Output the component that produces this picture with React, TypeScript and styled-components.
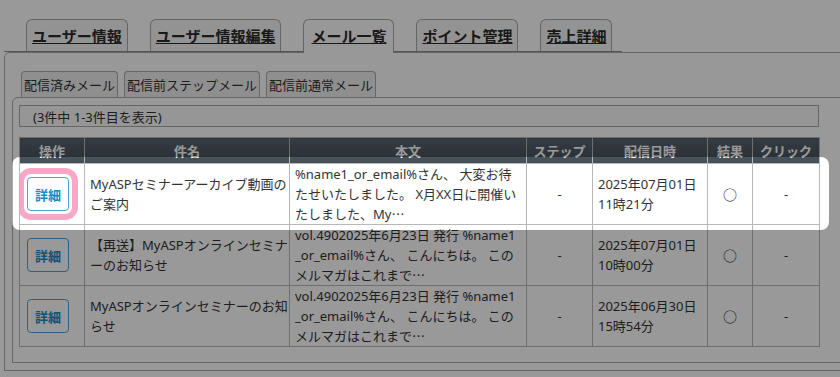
import React from 'react';
import styled, {createGlobalStyle} from 'styled-components';

const GlobalStyle = createGlobalStyle`
  html, body {
    margin: 0;
    padding: 0;
    background: #fff;
    overflow: hidden;
  }
  body {
    font-family: 'Noto Sans', 'Noto Sans CJK JP', sans-serif;
    color: #333;
  }
`;

const Page = styled.div`
  position: relative;
  width: 840px;
  height: 377px;
  overflow: hidden;
  box-sizing: border-box;
  padding: 19px 0 0 4px;
`;

const TabBar = styled.div`
  display: flex;
  align-items: flex-end;
  gap: 22px;
  width: 618px;
  box-sizing: border-box;
  padding-left: 22px;
  border-bottom: 1px solid #8c8c8c;
`;

const Tab = styled.div<{$active?: boolean}>`
  display: flex;
  align-items: center;
  box-sizing: border-box;
  height: ${(p) => (p.$active ? '34px' : '32px')};
  margin-bottom: ${(p) => (p.$active ? '-2px' : '0')};
  padding: ${(p) => (p.$active ? '0 7px 2px' : '0 5px')};
  position: relative;
  z-index: ${(p) => (p.$active ? 1 : 0)};
  border: 1px solid #a8a8a8;
  border-bottom: none;
  border-radius: 6px 6px 0 0;
  background: ${(p) => (p.$active ? '#fdfdfd' : '#f5f5f5')};
  font-size: 15px;
  font-weight: bold;
  text-decoration: underline;
  color: #2b2b2b;
`;

const Panel = styled.div`
  width: 900px;
  border: 1px solid #aaa;
  border-top-left-radius: 6px;
  background: #fdfdfd;
  padding: 18px 0 7px 7px;
`;

const SubTabBar = styled.div`
  display: flex;
  gap: 6px;
  padding-left: 9px;
`;

const SubTab = styled.div`
  display: flex;
  align-items: center;
  box-sizing: border-box;
  height: 26px;
  padding: 0 2px;
  border: 1px solid #aaa;
  border-bottom: none;
  border-radius: 4px 4px 0 0;
  background: #eee;
  font-size: 13px;
  color: #333;
`;

const Inner = styled.div`
  border: 1px solid #aaa;
  border-top-left-radius: 6px;
  background: #fff;
  padding: 7px 0 15px 6px;
`;

const Info = styled.div`
  display: flex;
  align-items: center;
  box-sizing: border-box;
  width: 800px;
  height: 22px;
  margin-bottom: 10px;
  padding-left: 13px;
  border: 1px solid #aaa;
  background: #fafafa;
  font-size: 13px;
`;

const TableWrap = styled.div`
  position: relative;
  width: 800px;
`;

const Table = styled.table`
  width: 800px;
  border-collapse: collapse;
  table-layout: fixed;
`;

const Th = styled.th`
  height: 25px;
  padding: 0;
  border: 1px solid #b8b8b8;
  background: linear-gradient(#58646e, #434e57);
  color: #fff;
  font-size: 13px;
  font-weight: bold;
  text-align: center;
`;

const Td = styled.td<{$align?: string}>`
  height: 60px;
  padding: 0 5px;
  border: 1px solid #b8b8b8;
  font-size: 13px;
  line-height: 20px;
  vertical-align: middle;
  white-space: nowrap;
  overflow: hidden;
  text-align: ${(p) => p.$align || 'left'};
`;

const ActionCell = styled(Td)`
  padding: 0 0 0 7px;
`;

const ResultMark = styled.span`
  font-family: 'Noto Sans CJK JP', sans-serif;
  font-size: 14px;
  color: #222;
`;

const DetailButton = styled.button<{$focus?: boolean}>`
  width: 42px;
  height: 34px;
  padding: 0;
  border: 1px solid #45a5d8;
  border-radius: 4px;
  background: #fff;
  color: #1b8bc8;
  font-family: inherit;
  font-size: 13px;
  font-weight: bold;
  outline: ${(p) => (p.$focus ? '6px solid #f8a7c7' : 'none')};
  outline-offset: 3px;
`;

const Dots = styled.span`
  font-family: 'Noto Sans CJK JP', sans-serif;
  font-feature-settings: 'fwid';
`;

const Spotlight = styled.div`
  position: absolute;
  top: 20px;
  left: -7px;
  width: 817px;
  height: 73px;
  border-radius: 8px;
  box-shadow: 0 0 0 2000px rgba(0, 0, 0, 0.4);
  pointer-events: none;
  z-index: 5;
`;

type Row = {
  subject: string[];
  body: string[];
  date: string[];
};

const bodyB = [
  'vol.4902025年6月23日 発行 %name1',
  '_or_email%さん、 こんにちは。 この',
  'メルマガはこれまで',
];

const rows: Row[] = [
  {
    subject: ['MyASPセミナーアーカイブ動画の', 'ご案内'],
    body: ['%name1_or_email%さん、 大変お待', 'たせいたしました。 X月XX日に開催い', 'たしました、My'],
    date: ['2025年07月01日', '11時21分'],
  },
  {
    subject: ['【再送】MyASPオンラインセミナ', 'ーのお知らせ'],
    body: bodyB,
    date: ['2025年07月01日', '10時00分'],
  },
  {
    subject: ['MyASPオンラインセミナーのお知', 'らせ'],
    body: bodyB,
    date: ['2025年06月30日', '15時54分'],
  },
];

const tabs = ['ユーザー情報', 'ユーザー情報編集', 'メール一覧', 'ポイント管理', '売上詳細'];
const subTabs = ['配信済みメール', '配信前ステップメール', '配信前通常メール'];
const cols = [
  {label: '操作', w: 65},
  {label: '件名', w: 205},
  {label: '本文', w: 237},
  {label: 'ステップ', w: 66},
  {label: '配信日時', w: 115},
  {label: '結果', w: 45},
  {label: 'クリック', w: 67},
];

const Lines = ({lines, dots}: {lines: string[]; dots?: boolean}) => (
  <>
    {lines.map((l, i) => (
      <div key={i}>
        {l}
        {dots && i === lines.length - 1 && <Dots>…</Dots>}
      </div>
    ))}
  </>
);

const App = (): JSX.Element => {
  return (
    <Page lang="ja">
      <GlobalStyle />
      <TabBar>
        {tabs.map((t) => (
          <Tab key={t} $active={t === 'メール一覧'}>
            {t}
          </Tab>
        ))}
      </TabBar>
      <Panel>
        <SubTabBar>
          {subTabs.map((t) => (
            <SubTab key={t}>{t}</SubTab>
          ))}
        </SubTabBar>
        <Inner>
          <Info>(3件中 1-3件目を表示)</Info>
          <TableWrap>
            <Table>
              <colgroup>
                {cols.map((c) => (
                  <col key={c.label} style={{width: c.w}} />
                ))}
              </colgroup>
              <thead>
                <tr>
                  {cols.map((c) => (
                    <Th key={c.label}>{c.label}</Th>
                  ))}
                </tr>
              </thead>
              <tbody>
                {rows.map((r, i) => (
                  <tr key={i}>
                    <ActionCell>
                      <DetailButton $focus={i === 0}>詳細</DetailButton>
                    </ActionCell>
                    <Td>
                      <Lines lines={r.subject} />
                    </Td>
                    <Td>
                      <Lines lines={r.body} dots />
                    </Td>
                    <Td $align="center">-</Td>
                    <Td>
                      <Lines lines={r.date} />
                    </Td>
                    <Td $align="center">
                      <ResultMark>○</ResultMark>
                    </Td>
                    <Td $align="center">-</Td>
                  </tr>
                ))}
              </tbody>
            </Table>
            <Spotlight />
          </TableWrap>
        </Inner>
      </Panel>
    </Page>
  );
};

export default App;
